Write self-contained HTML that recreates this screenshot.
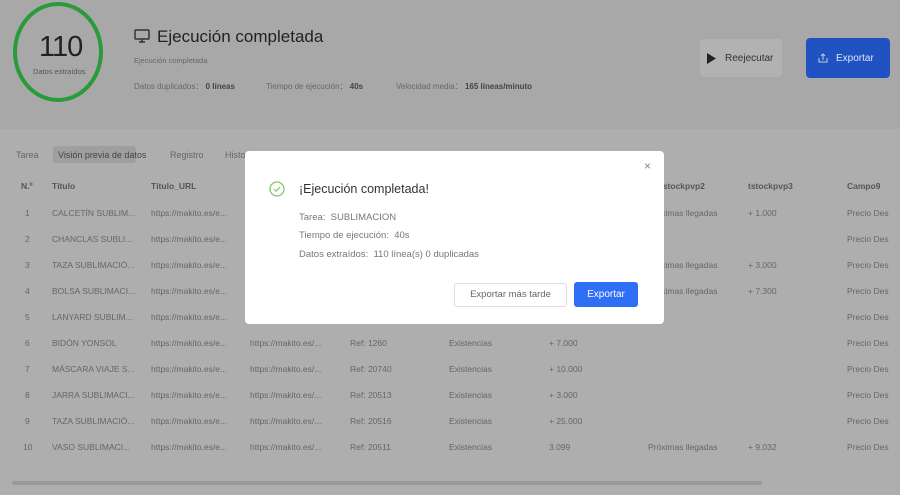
<!DOCTYPE html>
<html><head><meta charset="utf-8"><style>
*{margin:0;padding:0;box-sizing:border-box}
body{width:900px;height:495px;overflow:hidden;background:#aeaeae;font-family:"Liberation Sans",sans-serif;position:relative;color:#555}
.top{position:absolute;left:0;top:0;width:900px;height:129px;background:#a8a8a8}
.circ{position:absolute;left:13px;top:2px;width:90px;height:100px;border:4px solid #2a9a3a;border-radius:50%}
.abs{position:absolute;white-space:nowrap}
.t{font-size:9px;color:#555}
.cell{position:absolute;font-size:8.5px;color:#666;white-space:nowrap}
.hd{font-weight:bold;color:#555}
.modal{position:absolute;left:245px;top:151px;width:419px;height:173px;background:#fff;border-radius:4px}
</style></head><body>
<div class="top"></div>
<div class="circ"></div>
<div class="abs" style="left:39px;top:31px;font-size:29px;color:#222;letter-spacing:-1px">110</div>
<div class="abs" style="left:33px;top:67px;font-size:7.5px;color:#555">Datos extraídos</div>
<svg class="abs" style="left:134px;top:29px" width="16" height="15" viewBox="0 0 16 15"><rect x="1" y="1" width="14" height="9" rx="1" fill="none" stroke="#333" stroke-width="1.5"/><path d="M5 13h6M8 10v3" stroke="#333" stroke-width="1.5"/></svg>
<div class="abs" style="left:157px;top:27px;font-size:17px;color:#222">Ejecución completada</div>
<div class="abs" style="left:134px;top:56px;font-size:7.5px;color:#666">Ejecución completada</div>
<div class="abs" style="left:134px;top:81px;font-size:8px;color:#666">Datos duplicados： <b style="color:#444">0 líneas</b></div>
<div class="abs" style="left:266px;top:81px;font-size:8px;color:#666">Tiempo de ejecución： <b style="color:#444">40s</b></div>
<div class="abs" style="left:396px;top:81px;font-size:8px;color:#666">Velocidad media： <b style="color:#444">165 líneas/minuto</b></div>
<div class="abs" style="left:700px;top:39px;width:82px;height:38px;background:#b2b2b2;border-radius:4px"></div>
<svg class="abs" style="left:706px;top:53px" width="10" height="11"><path d="M1 0L10 5.5L1 11Z" fill="#222"/></svg>
<div class="abs" style="left:725px;top:53px;font-size:10px;color:#333">Reejecutar</div>
<div class="abs" style="left:806px;top:38px;width:84px;height:40px;background:#2152c2;border-radius:4px"></div>
<svg class="abs" style="left:818px;top:53px" width="10" height="10"><path d="M1 5v4h8V5M5 7V1M3 3l2-2 2 2" fill="none" stroke="#bcd" stroke-width="1"/></svg>
<div class="abs" style="left:836px;top:53px;font-size:10px;color:#dde6f8">Exportar</div>
<div class="abs t" style="left:16px;top:150px;color:#666">Tarea</div>
<div class="abs" style="left:53px;top:146px;width:83px;height:17px;background:#9f9f9f;border-radius:3px"></div>
<div class="abs t" style="left:58px;top:150px;color:#444">Visión previa de datos</div>
<div class="abs t" style="left:170px;top:150px;color:#666">Registro</div>
<div class="abs t" style="left:225px;top:150px;color:#666">Histo</div>
<div class="cell hd" style="left:21px;top:181px">N.º</div>
<div class="cell hd" style="left:52px;top:181px">Título</div>
<div class="cell hd" style="left:151px;top:181px">Título_URL</div>
<div class="cell hd" style="left:660px;top:181px">tstockpvp2</div>
<div class="cell hd" style="left:748px;top:181px">tstockpvp3</div>
<div class="cell hd" style="left:847px;top:181px">Campo9</div>
<div id="rows"></div>
<script>
var t=["CALCETÍN SUBLIM...","CHANCLAS SUBLI...","TAZA SUBLIMACIÓ...","BOLSA SUBLIMACI...","LANYARD SUBLIM...","BIDÓN YONSOL","MÁSCARA VIAJE S...","JARRA SUBLIMACI...","TAZA SUBLIMACIÓ...","VASO SUBLIMACI..."];
var ref=["","","","","","Ref: 1260","Ref: 20740","Ref: 20513","Ref: 20516","Ref: 20511"];
var c7=["","","","","","+ 7.000","+ 10.000","+ 3.000","+ 25.000","3.099"];
var c8=["Próximas llegadas","","Próximas llegadas","Próximas llegadas","","","","","","Próximas llegadas"];
var c9=["+ 1.000","","+ 3.000","+ 7.300","","","","","","+ 9.032"];
var h="";
for(var i=0;i<10;i++){var y=208+i*26;
h+='<div class="cell" style="left:'+(i==9?23:25)+'px;top:'+y+'px">'+(i+1)+'</div>';
h+='<div class="cell" style="left:52px;top:'+y+'px">'+t[i]+'</div>';
h+='<div class="cell" style="left:151px;top:'+y+'px">https://makito.es/e...</div>';
if(i>4){h+='<div class="cell" style="left:250px;top:'+y+'px">https://makito.es/...</div>';
h+='<div class="cell" style="left:350px;top:'+y+'px">'+ref[i]+'</div>';
h+='<div class="cell" style="left:449px;top:'+y+'px">Existencias</div>';
h+='<div class="cell" style="left:549px;top:'+y+'px">'+c7[i]+'</div>';}
h+='<div class="cell" style="left:648px;top:'+y+'px">'+c8[i]+'</div>';
h+='<div class="cell" style="left:748px;top:'+y+'px">'+c9[i]+'</div>';
h+='<div class="cell" style="left:847px;top:'+y+'px">Precio Des</div>';}
document.getElementById('rows').innerHTML=h;
</script>
<div class="abs" style="left:12px;top:481px;width:750px;height:4px;background:#999;border-radius:2px"></div>
<div class="modal">
<div class="abs" style="left:399px;top:8px;font-size:12px;color:#888">×</div>
<svg class="abs" style="left:24px;top:30px" width="16" height="16"><circle cx="8" cy="8" r="7" fill="none" stroke="#7cc96a" stroke-width="1.3"/><path d="M5 8.2l2 2 4-4" fill="none" stroke="#7cc96a" stroke-width="1.2"/></svg>
<div class="abs" style="left:54px;top:31px;font-size:12.5px;color:#333">¡Ejecución completada!</div>
<div class="abs" style="left:54px;top:61px;font-size:9.5px;color:#777">Tarea:&nbsp; SUBLIMACION</div>
<div class="abs" style="left:54px;top:79px;font-size:9.5px;color:#777">Tiempo de ejecución:&nbsp; 40s</div>
<div class="abs" style="left:54px;top:98px;font-size:9.5px;color:#777">Datos extraídos:&nbsp; 110 línea(s) 0 duplicadas</div>
<div class="abs" style="left:209px;top:132px;width:113px;height:24px;border:1px solid #ddd;border-radius:3px;font-size:9.5px;color:#666;text-align:center;line-height:22px">Exportar más tarde</div>
<div class="abs" style="left:329px;top:131px;width:64px;height:25px;background:#2f6ff5;border-radius:3px;font-size:10px;color:#fff;text-align:center;line-height:25px">Exportar</div>
</div>
</body></html>
